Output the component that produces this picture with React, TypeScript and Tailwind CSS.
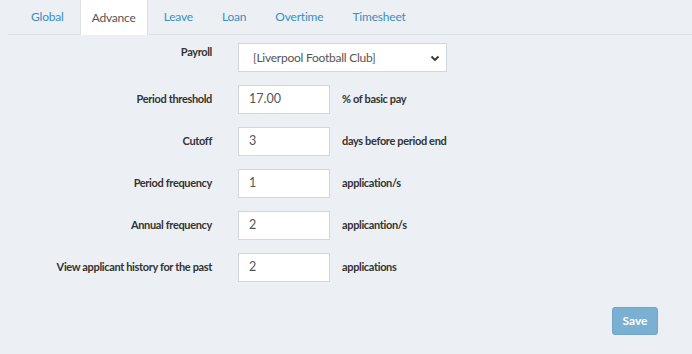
const tabs = ["Global", "Advance", "Leave", "Loan", "Overtime", "Timesheet"]

const rows = [
  { label: "Period threshold", value: "17.00", suffix: "% of basic pay" },
  { label: "Cutoff", value: "3", suffix: "days before period end" },
  { label: "Period frequency", value: "1", suffix: "application/s" },
  { label: "Annual frequency", value: "2", suffix: "applicantion/s" },
  { label: "View applicant history for the past", value: "2", suffix: "applications" },
]

export default function App() {
  return (
    <div className="w-[692px] h-[354px] bg-[#ecf0f5] text-[#333] overflow-hidden" style={{ fontFamily: "Lato, 'Open Sans', sans-serif" }}>
      {/* tabs */}
      <div className="ml-2 flex h-[35px] border-b border-[#dde1e6] pl-[10px]">
        {tabs.map((t) => (
          <div
            key={t}
            className={
              t === "Advance"
                ? "-mb-px mr-[3px] flex items-center bg-white border-x border-[#dde1e6] px-[11px] text-[12px] tracking-[-0.2px] text-[#555]"
                : "mr-[3px] flex items-center px-[13px] text-[12px] tracking-[-0.2px] text-[#3c8dbc]"
            }
          >
            {t}
          </div>
        ))}
      </div>

      <div className="flex flex-col gap-[13px] pt-2">
        <div className="flex">
          <div className="w-[212px] pt-[1px] text-right text-[11px] leading-[16px] tracking-[-0.35px] font-bold">Payroll</div>
          <div className="ml-[26px] flex h-[29px] w-[209px] items-center justify-between border border-[#d2d6de] bg-white pl-[14px] pr-[6px] text-[12px] tracking-[-0.25px] text-[#555]">
            <span>[Liverpool Football Club]</span>
            <svg width="10" height="10" viewBox="0 0 10 10" fill="none" stroke="#333" strokeWidth="1.8">
              <path d="M1.5 3.5 5 7l3.5-3.5" />
            </svg>
          </div>
        </div>

        {rows.map((r) => (
          <div key={r.label} className="flex items-center">
            <div className="w-[212px] text-right text-[11px] tracking-[-0.35px] font-bold">{r.label}</div>
            <div className="ml-[26px] flex h-[29px] w-[92px] items-center border border-[#d2d6de] bg-white pl-[10px] text-[12.5px] text-[#555]">
              {r.value}
            </div>
            <div className="ml-[12px] text-[11px] tracking-[-0.35px] font-bold">{r.suffix}</div>
          </div>
        ))}
      </div>

      <div className="mt-[25px] flex justify-end pr-[34px]">
        <button className="h-[28px] w-[46px] rounded-[3px] border border-[#6fa6c8] bg-[#7ab0d1] text-[12px] font-bold text-white">
          Save
        </button>
      </div>
    </div>
  )
}
